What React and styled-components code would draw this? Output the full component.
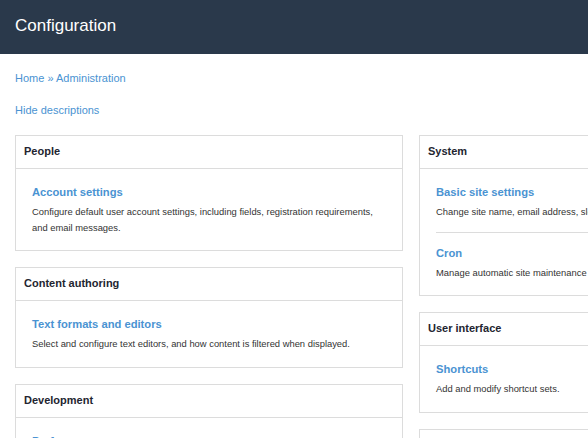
import React from "react";
import styled, { createGlobalStyle } from "styled-components";

const GlobalStyle = createGlobalStyle`
  html, body {
    margin: 0;
    padding: 0;
    overflow: hidden;
    background: #fff;
  }
  body {
    font-family: "Liberation Sans", Arial, sans-serif;
    color: #222330;
  }
`;

const Header = styled.div`
  height: 54px;
  background: #2a394b;
  display: flex;
  align-items: center;
  padding: 0 15px 2px;
  box-sizing: border-box;
`;

const Title = styled.h1`
  margin: 0;
  font-size: 17px;
  font-weight: normal;
  color: #fff;
`;

const Page = styled.div`
  padding: 0 15px;
`;

const Link = styled.a`
  color: #4a93d2;
  text-decoration: none;
  cursor: pointer;
`;

const Breadcrumb = styled.div`
  font-size: 11px;
  line-height: 16px;
  margin-top: 16px;
  color: #4a93d2;
`;

const Toggle = styled.div`
  font-size: 11px;
  line-height: 16px;
  margin-top: 16px;
`;

const Columns = styled.div`
  display: grid;
  grid-template-columns: 388px 388px;
  column-gap: 16px;
  margin-top: 17px;
  align-items: start;
`;

const Column = styled.div`
  display: flex;
  flex-direction: column;
  gap: 16px;
`;

const Panel = styled.div`
  border: 1px solid #dcdcdc;
  background: #fff;
`;

const PanelTitle = styled.div`
  font-size: 11px;
  font-weight: bold;
  line-height: 16px;
  padding: 7px 8px 9px;
  border-bottom: 1px solid #dcdcdc;
  color: #232530;
`;

const PanelBody = styled.div`
  padding: 3px 0;
`;

const Item = styled.div`
  padding: 0 16px;
  & + & > div {
    border-top: 1px solid #dcdcdc;
  }
`;

const ItemInner = styled.div`
  padding: 12px 0;
`;

const ItemLink = styled(Link)`
  display: block;
  font-size: 11.2px;
  font-weight: bold;
  line-height: 16px;
  margin-bottom: 4px;
  white-space: nowrap;
`;

const Description = styled.div`
  font-size: 9.4px;
  line-height: 15.5px;
  color: #333;
  white-space: ${(p) => (p.$wrap ? "normal" : "nowrap")};
`;

const left = [
  {
    title: "People",
    items: [
      {
        name: "Account settings",
        desc: "Configure default user account settings, including fields, registration requirements, and email messages.",
      },
    ],
  },
  {
    title: "Content authoring",
    items: [
      {
        name: "Text formats and editors",
        desc: "Select and configure text editors, and how content is filtered when displayed.",
      },
    ],
  },
  {
    title: "Development",
    items: [
      {
        name: "Performance",
        desc: "Configure blocks and page caching, bandwidth optimizations.",
      },
    ],
  },
];

const right = [
  {
    title: "System",
    items: [
      {
        name: "Basic site settings",
        desc: "Change site name, email address, slogan, default front page, and error pages.",
      },
      {
        name: "Cron",
        desc: "Manage automatic site maintenance tasks.",
      },
    ],
  },
  {
    title: "User interface",
    items: [{ name: "Shortcuts", desc: "Add and modify shortcut sets." }],
  },
  {
    title: "Regional and language",
    items: [
      {
        name: "Regional settings",
        desc: "Settings for the site's default time zone and country.",
      },
    ],
  },
];

function ConfigPanel({ title, items }) {
  return (
    <Panel>
      <PanelTitle>{title}</PanelTitle>
      <PanelBody>
        {items.map((it) => (
          <Item key={it.name}>
            <ItemInner>
              <ItemLink>{it.name}</ItemLink>
              <Description $wrap>{it.desc}</Description>
            </ItemInner>
          </Item>
        ))}
      </PanelBody>
    </Panel>
  );
}

export default function App() {
  return (
    <>
      <GlobalStyle />
      <Header>
        <Title>Configuration</Title>
      </Header>
      <Page>
        <Breadcrumb>
          <Link>Home</Link> » <Link>Administration</Link>
        </Breadcrumb>
        <Toggle>
          <Link>Hide descriptions</Link>
        </Toggle>
        <Columns>
          <Column>
            {left.map((p) => (
              <ConfigPanel key={p.title} {...p} />
            ))}
          </Column>
          <Column>
            {right.map((p) => (
              <ConfigPanel key={p.title} {...p} />
            ))}
          </Column>
        </Columns>
      </Page>
    </>
  );
}
